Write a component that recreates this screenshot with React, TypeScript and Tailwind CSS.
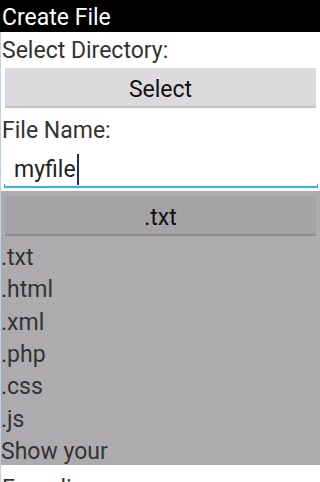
import React from 'react';

const extensions = ['.txt', '.html', '.xml', '.php', '.css', '.js', 'Show your'];

export default function App() {
  return <div className="h-[482px] w-[320px] overflow-hidden bg-white text-[23px] text-[#333333]" style={{ fontFamily: 'Roboto, "Noto Sans", sans-serif' }}>
      {/* title bar */}
      <div className="h-[32px] bg-black pl-[2px] pt-[2px] leading-[31px] text-white">Create File</div>
      <div className="flex flex-col border-l border-[#b6d3ee]">
        <div className="h-[36px] pl-[1px] pt-[2px] leading-[34px]">Select Directory:</div>
        <div role="button" className="mx-[4px] h-[40px] border-b-2 border-[#c3c1c4] bg-[#dcdadd] pt-[3px] text-center leading-[37px] text-[#111111]">
          Select
        </div>
        <div className="mt-[4px] h-[36px] pl-[1px] pt-[2px] leading-[34px]">File Name:</div>
        <div className="h-[36px] whitespace-nowrap pl-[13px] pt-[3px] leading-[38px] text-[#222222]">
          myfile
          <span className="ml-[1px] inline-block h-[31px] w-[2px] bg-[#1d2f63] align-[-8px]" />
        </div>
        <div className="ml-[3px] mr-[2px] h-[4px] border-x border-b-2 border-[#33b5e5]" />
        {/* dimmed spinner with open list */}
        <div className="mt-[3px] h-[274px] overflow-hidden bg-[#adabae]">
          <div className="mx-[4px] mt-[5px] h-[40px] border-b-2 border-[#8e8c8f] bg-[#a5a3a6] pt-[3px] text-center leading-[37px] text-[#111111]">.txt</div>
          <div className="mt-[6px] flex flex-col">
            {extensions.map(ext => <div key={ext} className="h-[32.33px] whitespace-nowrap leading-[32.33px]">
                {ext}
              </div>)}
          </div>
        </div>
        <div className="h-[40px] pl-[1px] pt-[6px] leading-[36px]">Encoding:</div>
      </div>
    </div>;
}
